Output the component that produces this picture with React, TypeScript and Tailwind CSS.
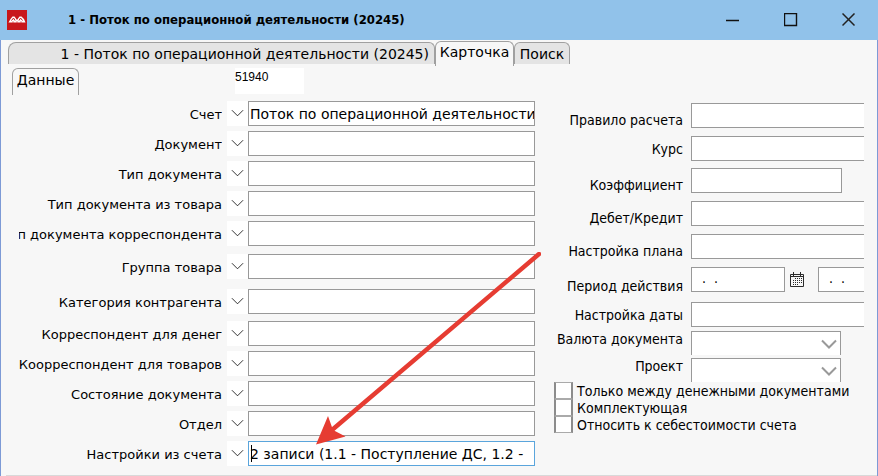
import { clsx } from "clsx";

interface LookupField {
    id: string;
    label: string;
    value?: string;
    gap?: string;
    active?: boolean;
}

const lookupFields: LookupField[] = [
    { id: "account", label: "Счет", value: "Поток по операционной деятельности" },
    { id: "document", label: "Документ", gap: "mt-[5px]" },
    { id: "doc-type", label: "Тип документа", gap: "mt-[5px]" },
    { id: "goods-doc-type", label: "Тип документа из товара", gap: "mt-[5px]" },
    { id: "partner-doc-type", label: "Тип документа корреспондента", gap: "mt-[5px]" },
    { id: "goods-group", label: "Группа товара", gap: "mt-2" },
    { id: "partner-category", label: "Категория контрагента", gap: "mt-2.5" },
    { id: "money-partner", label: "Корреспондент для денег", gap: "mt-[7px]" },
    { id: "goods-partner", label: "Коорреспондент для товаров", gap: "mt-[5px]" },
    { id: "doc-state", label: "Состояние документа", gap: "mt-[5px]" },
    { id: "department", label: "Отдел", gap: "mt-[5px]" },
    {
        id: "account-settings",
        label: "Настройки из счета",
        value: "2 записи (1.1 - Поступление ДС, 1.2 -",
        gap: "mt-[5px]",
        active: true,
    },
];

const flags = [
    { id: "money-only", label: "Только между денежными документами" },
    { id: "component", label: "Комплектующая" },
    { id: "cost-price", label: "Относить к себестоимости счета" },
];

const openInput = "h-[25px] min-w-0 flex-1 border border-r-0 border-[#999] bg-white px-2 outline-none";

function Chevron({ className }: { className?: string }) {
    return (
        <svg viewBox="0 0 16 10" className={className} fill="none" stroke="currentColor" aria-hidden="true">
            <path d="M1 1.5 8 8.5 15 1.5" />
        </svg>
    );
}

function CalendarIcon() {
    return (
        <svg width="14" height="16" viewBox="0 0 14 16" fill="none" stroke="#2b2b2b" aria-hidden="true">
            <path d="M.5 2.5h13v12H.5zM.5 4.5h13M3.500 0v4M10.500 0v4" />
            <path d="M5 6.500h7M3 8.500h9M3 10.500h9M3 12.500h6" strokeDasharray="1 1" />
        </svg>
    );
}

function TitleBar() {
    return (
        <header className="flex h-10 items-center bg-[#91c2ea] pl-[7px]">
            <svg width="20" height="20" viewBox="0 0 20 20" aria-hidden="true">
                <path d="M0 0h20v20H0z" fill="#c8171c" />
                <path d="M1.500 12.500 3.500 9 5.500 6.500h2L10 10l2.500-3.500h2L17 9l1.500 3.500z" fill="#fff" />
                <path d="M4.500 10.500 6.500 8l1.500 2.500M12 10.500 13.500 8l2 2.500M5.500 12h1M9.500 12h1M13.500 12h1" fill="none" stroke="#c8171c" />
            </svg>
            <h1 className="ml-[41px] flex-1 text-[13px] font-bold whitespace-nowrap font-['DejaVu_Sans_Condensed','DejaVu_Sans',sans-serif]">
                1 - Поток по операционной деятельности (20245)
            </h1>
            <button type="button" aria-label="Свернуть" className="flex h-10 w-[58px] items-center justify-center">
                <svg width="14" height="14" viewBox="0 0 14 14" stroke="#111" strokeWidth="1.500">
                    <path d="M0 7.500h13" />
                </svg>
            </button>
            <button type="button" aria-label="Развернуть" className="flex h-10 w-[58px] items-center justify-center">
                <svg width="14" height="14" viewBox="0 0 14 14" fill="none" stroke="#111" strokeWidth="1.400">
                    <path d="M.5 .5h12v12H.5z" />
                </svg>
            </button>
            <button type="button" aria-label="Закрыть" className="flex h-10 w-[58px] items-center justify-center">
                <svg width="14" height="14" viewBox="0 0 14 14" stroke="#222" strokeWidth="1.500">
                    <path d="M.5 .5l12 12M12.500 .5l-12 12" />
                </svg>
            </button>
        </header>
    );
}

function LookupRow({ field }: { field: LookupField }) {
    return (
        <div className={clsx("flex h-[25px]", field.gap)}>
            <label
                htmlFor={field.id}
                className="mr-[5px] flex w-[203px] shrink-0 justify-end overflow-hidden pt-1 text-[13px] leading-5"
            >
                <span className="shrink-0 whitespace-nowrap">{field.label}</span>
            </label>
            <button
                type="button"
                aria-label={`Выбрать: ${field.label}`}
                className="flex w-[21px] shrink-0 items-center justify-center bg-white pb-0.5 text-black"
            >
                <Chevron className="h-2 w-[13px]" />
            </button>
            <div className="relative min-w-0 flex-1">
                <input
                    id={field.id}
                    type="text"
                    defaultValue={field.value}
                    className={clsx(
                        "block h-[25px] w-full border bg-white pl-px text-[14px] outline-none",
                        field.active ? "border-[#5aa5dc]" : "border-[#999]"
                    )}
                />
                {field.active && <span className="absolute top-1 left-[3px] h-[17px] w-px bg-black" />}
            </div>
        </div>
    );
}

function FieldLabel({ id, className, children }: { id: string; className: string; children: string }) {
    return (
        <label
            htmlFor={id}
            className={clsx("mr-2 flex w-[129px] shrink-0 justify-end leading-4 whitespace-nowrap", className)}
        >
            {children}
        </label>
    );
}

export default function App() {
    return (
        <div className="flex min-h-screen flex-col border-x border-x-[#7d9ad6] bg-[#f7f7f7] font-['DejaVu_Sans',Verdana,sans-serif] text-black">
            <div className="-mx-px">
                <TitleBar />
            </div>

            <nav className="flex h-[26px] items-start pt-px pl-[7px] text-[14px] whitespace-nowrap">
                <button
                    type="button"
                    className="mt-px h-[22px] w-[427px] rounded-tl-lg rounded-tr-md border border-b-0 border-[#a0a0a0] bg-[#e4e4e4] pr-[5px] text-right leading-5"
                >
                    1 - Поток по операционной деятельности (20245)
                </button>
                <button
                    type="button"
                    className="h-[25px] w-[79px] rounded-t-md border border-b-0 border-[#a0a0a0] bg-[#f7f7f7] pb-1 leading-5"
                >
                    Карточка
                </button>
                <button
                    type="button"
                    className="mt-px h-[22px] w-14 rounded-t-md border border-b-0 border-[#a0a0a0] bg-[#e4e4e4] leading-5"
                >
                    Поиск
                </button>
            </nav>

            <div className="mt-0.5 flex pl-[11px]">
                <button
                    type="button"
                    className="h-[27px] w-[67px] rounded-t-md border border-b-0 border-[#a0a0a0] pb-1 text-[14px] leading-5"
                >
                    Данные
                </button>
                <input
                    aria-label="Номер"
                    defaultValue="51940"
                    className="ml-[156px] h-[26px] w-[69px] bg-white pb-2 text-[12px] outline-none font-['Liberation_Sans',Arial,sans-serif]"
                />
            </div>

            <main className="flex flex-1 items-start pt-1.5 pr-[13px] pl-[18px]">
                <section className="relative min-w-0 flex-1">
                    {lookupFields.map((field) => (
                        <LookupRow key={field.id} field={field} />
                    ))}
                    <svg
                        width="226"
                        height="193"
                        viewBox="0 0 226 193"
                        className="pointer-events-none absolute -right-1.5 bottom-[21px]"
                        aria-hidden="true"
                    >
                        <path d="M224 2 17 178" stroke="#e63c32" strokeWidth="4.5" strokeLinecap="round" />
                        <path d="M1 192.500 13 164l5 14 12.500 6.500z" fill="#e63c32" />
                    </svg>
                </section>

                <section className="ml-[19px] w-[310px] shrink-0 pt-0.5 text-[14px] font-['DejaVu_Sans_Condensed','DejaVu_Sans',sans-serif]">
                    <div className="flex">
                        <FieldLabel id="rule" className="items-end">Правило расчета</FieldLabel>
                        <input id="rule" type="text" className={openInput} />
                    </div>
                    <div className="mt-2 flex">
                        <FieldLabel id="rate" className="items-center">Курс</FieldLabel>
                        <input id="rate" type="text" className={openInput} />
                    </div>
                    <div className="mt-[7px] flex">
                        <FieldLabel id="ratio" className="items-end">Коэффициент</FieldLabel>
                        <input id="ratio" type="text" className="h-[25px] w-[151px] border border-[#999] bg-white px-2 outline-none" />
                    </div>
                    <div className="mt-2 flex">
                        <FieldLabel id="side" className="items-end">Дебет/Кредит</FieldLabel>
                        <input id="side" type="text" className={openInput} />
                    </div>
                    <div className="mt-2 flex">
                        <FieldLabel id="plan" className="items-end">Настройка плана</FieldLabel>
                        <input id="plan" type="text" className={openInput} />
                    </div>
                    <div className="mt-2 flex h-[27px]">
                        <FieldLabel id="date-from" className="items-end">Период действия</FieldLabel>
                        <input
                            id="date-from"
                            type="text"
                            defaultValue=".  ."
                            className="h-[25px] w-[94px] border border-[#999] bg-white px-2.5 pb-1 outline-none"
                        />
                        <button type="button" aria-label="Календарь" className="flex h-[25px] w-[33px] items-center pl-[5px]">
                            <CalendarIcon />
                        </button>
                        <input
                            aria-label="Период действия, окончание"
                            type="text"
                            defaultValue=".  ."
                            className="h-[25px] min-w-0 flex-1 border border-r-0 border-[#999] bg-white px-2.5 pb-1 outline-none"
                        />
                    </div>
                    <div className="mt-2 flex">
                        <FieldLabel id="date-setup" className="items-center">Настройка даты</FieldLabel>
                        <input id="date-setup" type="text" className={openInput} />
                    </div>
                    <div className="mt-1 flex">
                        <FieldLabel id="currency" className="items-start">Валюта документа</FieldLabel>
                        <div className="relative">
                            <select id="currency" className="block h-6 w-[150px] appearance-none border border-b-0 border-[#999] bg-white outline-none">
                                <option></option>
                            </select>
                            <Chevron className="pointer-events-none absolute top-2 right-1 h-2.5 w-4 stroke-2 text-[#999]" />
                        </div>
                    </div>
                    <div className="mt-[3px] flex">
                        <FieldLabel id="project" className="items-start">Проект</FieldLabel>
                        <div className="relative">
                            <select id="project" className="block h-6 w-[150px] appearance-none border border-b-0 border-[#999] bg-white outline-none">
                                <option></option>
                            </select>
                            <Chevron className="pointer-events-none absolute top-2 right-1 h-2.5 w-4 stroke-2 text-[#999]" />
                        </div>
                    </div>
                    {flags.map((flag) => (
                        <div key={flag.id} className="flex h-[17px] items-center">
                            <input
                                id={flag.id}
                                type="checkbox"
                                className="h-[17px] w-[19px] shrink-0 appearance-none border-x-2 border-y border-x-[#8c8c8c] border-y-[#aaa] bg-white"
                            />
                            <label htmlFor={flag.id} className="ml-1 leading-4 whitespace-nowrap">
                                {flag.label}
                            </label>
                        </div>
                    ))}
                </section>
            </main>

            <div className="ml-[5px] h-px bg-[#d9d9d9]" />
        </div>
    );
}
